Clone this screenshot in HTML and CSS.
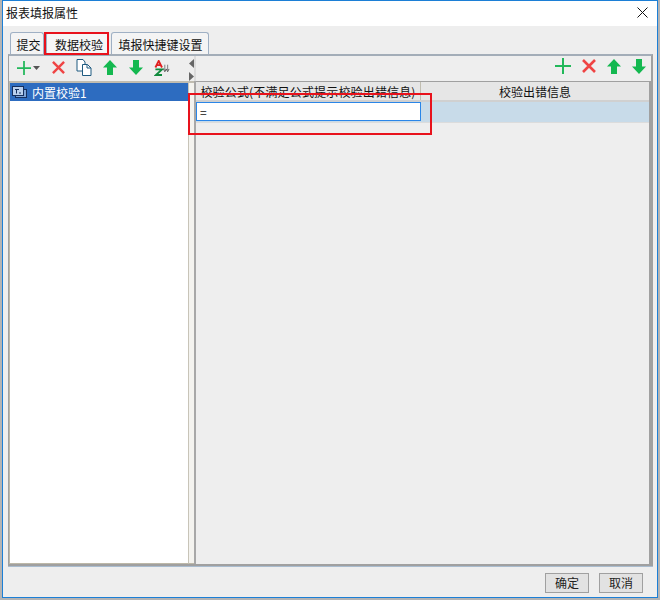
FILE: index.html
```html
<!DOCTYPE html>
<html lang="zh">
<head>
<meta charset="utf-8">
<title>报表填报属性</title>
<link rel="stylesheet" href="styles.css">
</head>
<body>
<svg class="defs" width="0" height="0" aria-hidden="true">
  <defs>
    <symbol id="plus" viewBox="0 0 16 16"><path d="M8 0v16M0 8h16" stroke="#22b85a" stroke-width="2" fill="none"/></symbol>
    <symbol id="cross" viewBox="0 0 14 14"><path d="M1 1l12 12M13 1L1 13" stroke="#ef4444" stroke-width="2.6" fill="none"/></symbol>
    <symbol id="up" viewBox="0 0 14 15"><path d="M7 0l7 7.500h-4V15H4V7.500H0z" fill="#14b850"/></symbol>
    <symbol id="down" viewBox="0 0 14 15"><path d="M7 15L0 7.500h4V0h6v7.500h4z" fill="#14b850"/></symbol>
  </defs>
</svg>
<div class="window">
  <header class="titlebar">
    <span class="title">报表填报属性</span>
    <svg class="close" width="11" height="11" viewBox="0 0 11 11"><path d="M0.500 0.500l10 10M10.500 0.500l-10 10" stroke="#111" stroke-width="1" fill="none"/></svg>
  </header>
  <div class="content">
    <nav class="tabs">
      <div class="tab tab-first">提交</div>
      <div class="tab tab-active">数据校验</div>
      <div class="tab tab-last">填报快捷键设置</div>
    </nav>
    <div class="panel">
      <section class="left">
        <div class="toolbar toolbar-left">
          <span class="add-group">
            <svg class="ic-plus" width="14" height="14"><use href="#plus"/></svg>
            <svg width="7" height="4" viewBox="0 0 7 4"><path d="M0 0h7L3.500 4z" fill="#555"/></svg>
          </span>
          <svg class="ic-cross" width="13" height="13"><use href="#cross"/></svg>
          <svg class="ic-copy" width="16" height="17" viewBox="0 0 16 17">
            <path d="M1 .5h6l2 2.500v9H1z" fill="#fff" stroke="#1f5a80"/>
            <path d="M6.500 5.500h5l3.500 3.500v7.500H6.500z" fill="#fff" stroke="#1f5a80"/>
            <path d="M11 5.500V9h4" fill="none" stroke="#1f5a80"/>
          </svg>
          <svg class="ic-arrow" width="14" height="15"><use href="#up"/></svg>
          <svg class="ic-arrow" width="14" height="15"><use href="#down"/></svg>
          <svg class="ic-sort" width="16" height="16" viewBox="0 0 16 17">
            <path d="M1 8L4.500 1 8 8M2.500 5.500h4" fill="none" stroke="#e02020" stroke-width="2"/>
            <path d="M1 10h7L1.500 16H8" fill="none" stroke="#108a3c" stroke-width="2"/>
            <path d="M11 5v6M14 5v6" stroke="#777" fill="none"/>
            <path d="M9.500 9.500l1.500 3 1.500-3M12.500 9.500l1.500 3 1.500-3" stroke="#555" fill="none"/>
          </svg>
        </div>
        <div class="list">
          <div class="list-item">
            <svg class="ic-item" width="15" height="12" viewBox="0 0 15 12">
              <rect x="3.500" y="3.500" width="11" height="8" fill="#7fa5d8" stroke="#16305f"/>
              <rect x="0.500" y="0.500" width="11" height="9" fill="#b9d0ee" stroke="#16305f"/>
              <path d="M3 3.500h4M4.500 3.500v4M7 7h2" stroke="#16305f" fill="none"/>
            </svg>
            <span>内置校验1</span>
          </div>
        </div>
      </section>
      <div class="splitter">
        <div class="split-arrows">
          <svg width="5" height="9" viewBox="0 0 5 9"><path d="M5 0v9L0 4.500z" fill="#666"/></svg>
          <svg width="5" height="9" viewBox="0 0 5 9"><path d="M0 0v9l5-4.500z" fill="#666"/></svg>
        </div>
        <div class="split-strip"></div>
      </div>
      <section class="right">
        <div class="toolbar toolbar-right">
          <svg width="16" height="16"><use href="#plus"/></svg>
          <svg width="14" height="14"><use href="#cross"/></svg>
          <svg width="14" height="15"><use href="#up"/></svg>
          <svg width="14" height="15"><use href="#down"/></svg>
        </div>
        <div class="table">
          <div class="thead">
            <div class="th th-formula">校验公式(不满足公式提示校验出错信息)</div>
            <div class="th th-message">校验出错信息</div>
          </div>
          <div class="row">
            <div class="cell-input">=</div>
          </div>
        </div>
      </section>
    </div>
    <footer class="footer">
      <button class="btn" type="button">确定</button>
      <button class="btn" type="button">取消</button>
    </footer>
  </div>
</div>
<div class="mark mark-tab"></div>
<div class="mark mark-cell"></div>
</body>
</html>
```

FILE: styles.css
```css
html, body {
  margin: 0;
  padding: 0;
}
body {
  position: relative;
  width: 660px;
  height: 600px;
  overflow: hidden;
  background-color: #ececec;
  background-image:
    linear-gradient(#b4b4b4, #b4b4b4),
    linear-gradient(#b4b4b4, #b4b4b4);
  background-size: 72px 1px, 1px 19px;
  background-position: 60px 17px, 60px 17px;
  font-family: "Noto Sans CJK SC", "Liberation Sans", sans-serif;
  font-size: 12px;
  color: #111;
}
.defs {
  position: absolute;
}
.window {
  display: flex;
  flex-direction: column;
  box-sizing: border-box;
  width: 656px;
  height: 598px;
  margin-left: 2px;
  border: 1px solid #1c7fd6;
  background: #eeeeee;
}
.titlebar {
  display: flex;
  align-items: center;
  justify-content: space-between;
  flex: none;
  box-sizing: border-box;
  height: 25px;
  padding: 0 9px 2px 3px;
  background: #fff;
}
.title {
  font-size: 12px;
}
.close {
  display: block;
}
.content {
  display: flex;
  flex-direction: column;
  flex: 1;
  min-height: 0;
  padding: 6px 4px 0 5px;
}
.tabs {
  display: flex;
  flex: none;
  gap: 2px;
  height: 22px;
  padding-left: 2px;
}
.tab {
  box-sizing: border-box;
  height: 22px;
  padding: 3px 0 0 3px;
  border: 1px solid #9fb0c4;
  border-bottom: 0;
  border-radius: 3px 3px 0 0;
  background: #f4f4f4;
  text-align: center;
  font-size: 12px;
  line-height: 17px;
}
.tab-first {
  width: 34px;
}
.tab-active {
  width: 63px;
  background: #f6f6f6;
}
.tab-last {
  width: 98px;
  padding-left: 1px;
}
.panel {
  display: flex;
  flex: none;
  box-sizing: border-box;
  height: 512px;
  margin-bottom: 1px;
  border: 1px solid #a0a0a0;
  border-top: 2px solid #a3adb8;
  border-right-width: 2px;
  border-bottom-width: 2px;
  box-shadow: 0 1px 0 #a9bccf;
}
.left {
  display: flex;
  flex-direction: column;
  flex: none;
  width: 179px;
}
.toolbar {
  display: flex;
  align-items: center;
  flex: none;
  box-sizing: border-box;
  height: 25px;
}
.toolbar-left {
  padding: 0 0 2px 8px;
}
.add-group {
  display: flex;
  align-items: center;
  gap: 2px;
  width: 35px;
}
.ic-cross {
  margin-right: 11px;
}
.ic-copy {
  margin-right: 11px;
}
.ic-arrow {
  margin-right: 12px;
}
.ic-sort {
  margin-left: -1px;
}
.list {
  flex: 1;
  min-height: 0;
  border-top: 2px solid #c0bcb0;
  border-left: 1px solid #bdb8a8;
  border-bottom: 1px solid #bdb8a8;
  background: #fff;
}
.list-item {
  display: flex;
  align-items: center;
  gap: 5px;
  height: 18px;
  padding-left: 2px;
  background: #2d6cc0;
  color: #fff;
  font-size: 12px;
}
.splitter {
  display: flex;
  flex-direction: column;
  flex: none;
  width: 6px;
}
.split-arrows {
  display: flex;
  flex-direction: column;
  align-items: center;
  flex: none;
  gap: 4px;
  box-sizing: border-box;
  height: 25px;
  padding-top: 3px;
}
.split-strip {
  flex: 1;
  border-top: 2px solid #c0bcb0;
  border-left: 1px solid #c8c4b8;
  border-bottom: 1px solid #bdb8a8;
  background: #f4f3ef;
}
.right {
  display: flex;
  flex-direction: column;
  flex: 1;
  min-width: 0;
}
.toolbar-right {
  justify-content: flex-end;
  gap: 11px;
  padding: 0 5px 5px 0;
  border-left: 2px solid #dcdcdc;
}
.table {
  flex: 1;
  border-left: 2px solid #a8a8a8;
  border-right: 2px solid #a0a0a0;
}
.thead {
  display: flex;
  box-sizing: border-box;
  height: 21px;
  border-top: 1px solid #a0a0a0;
  border-bottom: 2px solid #d0d0d0;
  background: #e6e6e6;
}
.th {
  box-sizing: border-box;
  text-align: center;
  font-size: 12px;
  line-height: 20px;
}
.th-formula {
  width: 225px;
  border-right: 1px solid #c0bdb0;
  letter-spacing: 0.16px;
}
.th-message {
  flex: 1;
}
.row {
  box-sizing: border-box;
  height: 21px;
  background: #c8dbe9;
  border-bottom: 1px solid #dcdcdc;
}
.cell-input {
  box-sizing: border-box;
  width: 225px;
  height: 19px;
  padding-left: 3px;
  border: 1px solid #2a86e8;
  background: #fff;
  font-size: 12px;
  line-height: 17px;
}
.footer {
  display: flex;
  flex: 1;
  align-items: center;
  justify-content: flex-end;
  gap: 10px;
  padding: 2px 10px 0 0;
}
.btn {
  box-sizing: border-box;
  width: 44px;
  height: 20px;
  padding: 0;
  border: 1px solid #a0a0a0;
  border-radius: 0;
  background: #e2e2e2;
  color: #222;
  font-family: inherit;
  font-size: 12px;
  line-height: 18px;
}
.mark {
  position: absolute;
  box-sizing: border-box;
  border: 2px solid #e8121c;
}
.mark-tab {
  left: 44px;
  top: 32px;
  width: 65px;
  height: 23px;
}
.mark-cell {
  left: 188px;
  top: 93px;
  width: 244px;
  height: 42px;
}
```
